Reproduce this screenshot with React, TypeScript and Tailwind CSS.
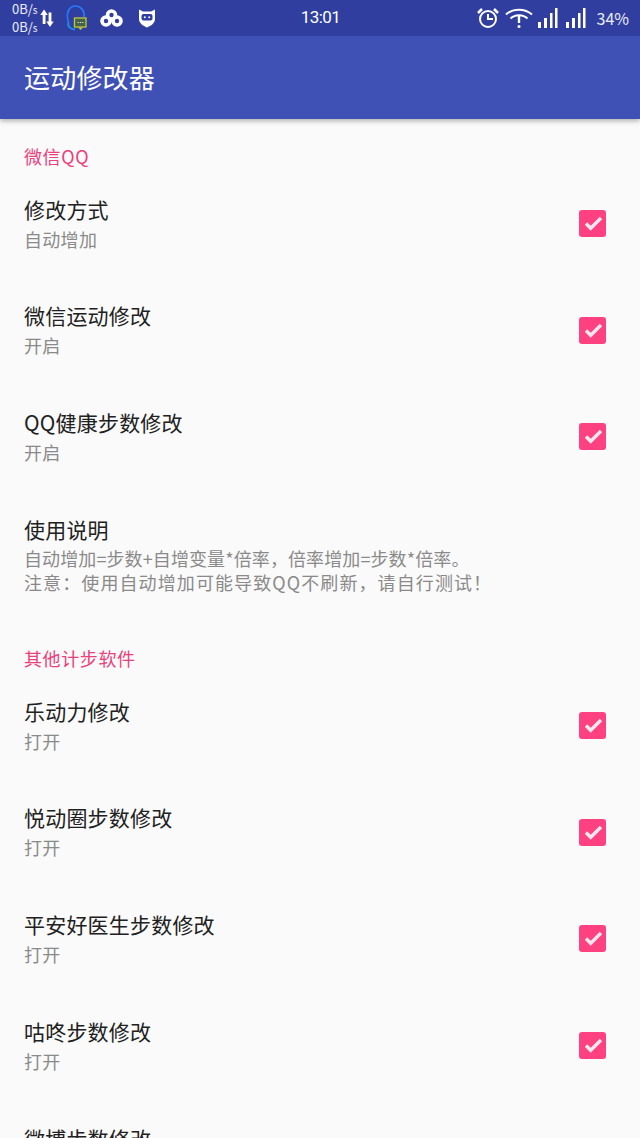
import React from "react";

const font = "font-['Noto_Sans_CJK_SC','Noto_Sans',sans-serif]";

function Check() {
  return (
    <div className="w-[27px] h-[27px] rounded-[3px] bg-[#ff4081] shrink-0">
      <svg width="27" height="27" viewBox="0 0 27 27">
        <path d="M7 13.500 L11.700 18.300 L22 8" fill="none" stroke="#fde7ef" strokeWidth="3.400" />
      </svg>
    </div>
  );
}

function Row({ title, sub, h }: { title: string; sub: string; h: string }) {
  return (
    <div className={`flex items-center justify-between pl-[24px] pr-[34px] ${h}`}>
      <div className="pb-[3px]">
        <div className="text-[21px] leading-[30px] text-[#212121] tracking-[0.2px]">{title}</div>
        <div className="text-[18px] leading-[24px] text-[#8a8a8a] mt-[3px] tracking-[0.3px]">{sub}</div>
      </div>
      <Check />
    </div>
  );
}

function Section({ children }: { children: string }) {
  return <div className="pl-[24px] h-[26px] text-[18px] leading-[24px] tracking-[0.6px] text-[#ec407a]">{children}</div>;
}

function Signal({ className }: { className: string }) {
  return (
    <svg width="23" height="22" viewBox="0 0 23 22" className={className} fill="#fff">
      <rect x="3" y="15" width="3" height="6" />
      <rect x="9" y="11" width="3" height="10" />
      <rect x="15" y="6" width="2.500" height="15" />
      <rect x="20" y="1" width="2.500" height="20" />
    </svg>
  );
}

function LeftIcons() {
  return (
    <div className="flex-1 flex items-center">
      <div className="text-[13px] leading-[17px] text-white/90 w-[28px]">
        <div>0B/<span className="text-[10px]">s</span></div>
        <div>0B/<span className="text-[10px]">s</span></div>
      </div>
      <svg width="14" height="20" viewBox="0 0 14 20" fill="#fff" className="mr-[11px]">
        <path d="M4 1.500L7.800 7H5.500V16H2.700V7H.3z" />
        <path d="M10 19L6.300 13.500H8.600V4.500H11.400V13.500H13.700z" />
      </svg>
      <svg width="22" height="26" viewBox="0 0 22 26" fill="none" className="mr-[13px]">
        <path d="M3.500 17C0 7 5 1 10.500 1S20 6 19 12" stroke="#2979ff" strokeWidth="1.600" />
        <path d="M3.500 17C2 21 5 24 10 24.500" stroke="#1e88e5" strokeWidth="2" />
        <rect x="9.500" y="13" width="11.500" height="9" fill="#43614f" stroke="#c0ca33" strokeWidth="1.300" />
        <path d="M13 22.500h5l-2.500 2.500z" fill="#c0ca33" />
        <path d="M12.500 17.500h1.300M14.800 17.500h1.300M17.100 17.500h1.300" stroke="#e6ee9c" strokeWidth="1.200" />
      </svg>
      <svg width="23" height="18" viewBox="0 0 23 18" fill="none" stroke="#fff" strokeWidth="3.600" className="mr-[15px]">
        <circle cx="11.500" cy="6" r="4" />
        <circle cx="6" cy="12" r="4" />
        <circle cx="17" cy="12" r="4" />
      </svg>
      <svg width="18" height="20" viewBox="0 0 18 20">
        <path d="M1 1.500l4 2h8l4-2v9.500c0 4-4 7-8 8.500-4-1.500-8-4.500-8-8.500z" fill="#fff" />
        <rect x="3.500" y="6" width="11" height="6.500" rx="2" fill="#303f9f" />
        <circle cx="6.800" cy="9.200" r="1" fill="#fff" />
        <circle cx="11.200" cy="9.200" r="1" fill="#fff" />
      </svg>
    </div>
  );
}

function RightIcons() {
  return (
    <div className="flex-1 flex items-center justify-end">
      <svg width="24" height="24" viewBox="0 0 24 24" className="mr-[4px]" fill="none" stroke="#fff" strokeWidth="2">
        <circle cx="12" cy="13" r="8" />
        <path d="M12 8v5h5" />
        <path d="M2 7l4-4M22 7l-4-4" strokeWidth="2.500" />
      </svg>
      <svg width="30" height="22" viewBox="0 0 30 22" className="mr-[1px]" fill="none" stroke="#fff" strokeWidth="2">
        <path d="M2 7.500C9 1 21 1 28 7.500" />
        <path d="M6.500 11.500C11 7 19 7 23.500 11.500" />
        <path d="M15 8v8" strokeWidth="2.400" />
        <circle cx="15" cy="19.500" r="1.500" fill="#fff" stroke="none" />
      </svg>
      <Signal className="mr-[5px]" />
      <Signal className="mr-[11px]" />
      <span className="text-[16px] text-white/90">34%</span>
    </div>
  );
}

export default function App() {
  return (
    <div className={`w-[640px] h-[1138px] overflow-hidden bg-[#fafafa] ${font}`}>
      <div className="relative z-10 shadow-[0_2px_5px_rgba(0,0,0,0.3)]">
        <div className="h-[36px] bg-[#303f9f] flex items-center pl-[12px] pr-[11px]">
          <LeftIcons />
          <span className="font-['Roboto',sans-serif] text-[17px] tracking-[-0.6px] text-white px-[2px]">13:01</span>
          <RightIcons />
        </div>
        <div className="h-[83px] bg-[#3f51b5] flex items-center pl-[24px] pb-[2px] text-[26px] tracking-[0.2px] text-white">
          运动修改器
        </div>
      </div>

      <div className="pt-[25px]">
        <Section>微信QQ</Section>
        <Row h="h-[107px]" title="修改方式" sub="自动增加" />
        <Row h="h-[106px]" title="微信运动修改" sub="开启" />
        <Row h="h-[107px]" title="QQ健康步数修改" sub="开启" />
        <div className="pl-[24px] h-[156px] pt-[24px]">
          <div className="text-[21px] leading-[30px] text-[#212121] tracking-[0.2px]">使用说明</div>
          <div className="text-[18px] leading-[24px] text-[#8a8a8a] mt-[2px] whitespace-nowrap">
            <div className="tracking-[0.1px]">自动增加=步数+自增变量*倍率，倍率增加=步数*倍率。</div>
            <div className="tracking-[1.100px]">注意：使用自动增加可能导致QQ不刷新，请自行测试！</div>
          </div>
        </div>
        <Section>其他计步软件</Section>
        <Row h="h-[107px]" title="乐动力修改" sub="打开" />
        <Row h="h-[106px]" title="悦动圈步数修改" sub="打开" />
        <Row h="h-[107px]" title="平安好医生步数修改" sub="打开" />
        <Row h="h-[107px]" title="咕咚步数修改" sub="打开" />
        <div className="pl-[24px] pt-[24px] text-[21px] leading-[30px] text-[#212121] tracking-[0.2px]">微博步数修改</div>
      </div>
    </div>
  );
}
